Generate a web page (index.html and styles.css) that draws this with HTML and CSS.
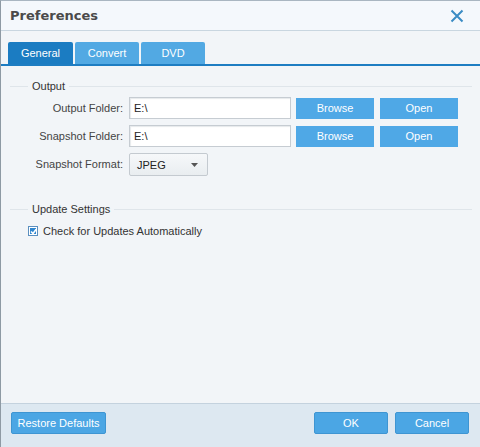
FILE: index.html
```html
<!DOCTYPE html>
<html>
<head>
<meta charset="utf-8">
<link rel="stylesheet" href="styles.css">
</head>
<body>
<div class="window">
  <div class="titlebar">
    <span class="title">Preferences</span>
    <svg class="close" width="14" height="14" viewBox="0 0 14 14"><path d="M1.5 1.5 L12.5 12.5 M12.5 1.5 L1.5 12.5" stroke="#3a8cc4" stroke-width="2" fill="none"/></svg>
  </div>
  <div class="tabs">
    <div class="tab active">General</div>
    <div class="tab">Convert</div>
    <div class="tab">DVD</div>
  </div>
  <div class="content">
    <fieldset class="group">
      <legend>Output</legend>
      <div class="row">
        <span class="label">Output Folder:</span>
        <div class="input">E:\</div>
        <div class="btn">Browse</div>
        <div class="btn">Open</div>
      </div>
      <div class="row">
        <span class="label">Snapshot Folder:</span>
        <div class="input">E:\</div>
        <div class="btn">Browse</div>
        <div class="btn">Open</div>
      </div>
      <div class="row">
        <span class="label">Snapshot Format:</span>
        <div class="select"><span>JPEG</span><svg width="7" height="4" viewBox="0 0 7 4"><path d="M0 0 H7 L3.5 4 Z" fill="#555"/></svg></div>
      </div>
    </fieldset>
    <fieldset class="group group2">
      <legend>Update Settings</legend>
      <div class="check">
        <span class="box"><svg width="7" height="7" viewBox="0 0 7 7"><path d="M1 3.5 L3 5.5 L6.2 1.2" stroke="#fff" stroke-width="1.6" fill="none"/></svg></span>
        <span>Check for Updates Automatically</span>
      </div>
    </fieldset>
  </div>
  <div class="footer">
    <div class="fbtn restore">Restore Defaults</div>
    <div class="spacer"></div>
    <div class="fbtn ok">OK</div>
    <div class="fbtn cancel">Cancel</div>
  </div>
</div>
</body>
</html>
```
FILE: styles.css
```css
* { box-sizing: border-box; }
html, body { margin: 0; padding: 0; }
body {
  font-family: "Liberation Sans", Arial, sans-serif;
  font-size: 11px;
  color: #333;
}
.window {
  width: 480px;
  height: 447px;
  display: flex;
  flex-direction: column;
  border-left: 1px solid #8e9aa4;
  border-top: 1px solid #a9b6c1;
  background: #f2f5f8;
}
.titlebar {
  height: 30px;
  flex: none;
  display: flex;
  align-items: center;
  justify-content: space-between;
  padding: 0 16px 0 9px;
  background: #f4f8fc;
  border-bottom: 1px solid #c9d6e0;
}
.title {
  font-family: "DejaVu Sans", sans-serif;
  font-weight: bold;
  font-size: 13px;
  color: #4a4a4a;
}
.close { display: block; }
.tabs {
  flex: none;
  display: flex;
  gap: 2px;
  padding: 11px 0 0 7px;
  height: 35px;
  border-bottom: 2px solid #1e7dc2;
  background: #f2f5f8;
}
.tab {
  width: 64px;
  height: 22px;
  line-height: 22px;
  text-align: center;
  color: #fff;
  background: #52a9e3;
  border-radius: 2px 2px 0 0;
  font-size: 11px;
}
.tab.active { background: #1b7cc2; width: 65px; }
.content {
  flex: 1;
  padding: 14px 8px 0 9px;
  background: #f2f5f8;
}
.group {
  margin: 0;
  padding: 5px 0 0 0;
  border: none;
  border-top: 1px solid #dfe5ea;
  min-width: 0;
}
.group legend {
  margin-left: 18px;
  padding: 0 4px;
  font-size: 11px;
  color: #333;
}
.group2 { margin-top: 22px; }
.row {
  display: flex;
  align-items: center;
  height: 22px;
  margin-bottom: 6px;
}
.label {
  width: 119px;
  text-align: right;
  padding-right: 6px;
  font-size: 11px;
  color: #444;
}
.input {
  width: 162px;
  height: 22px;
  line-height: 20px;
  border: 1px solid #c6ccd2;
  background: #fff;
  box-shadow: inset 1px 1px 1px #e6e9ec;
  padding-left: 4px;
  color: #222;
  margin-right: 5px;
}
.btn {
  width: 78px;
  height: 21px;
  line-height: 21px;
  text-align: center;
  background: #4fa8e6;
  color: #fff;
  margin-right: 6px;
  font-size: 11px;
}
.select {
  width: 79px;
  height: 23px;
  margin-top: 1px;
  border: 1px solid #c4cad0;
  border-radius: 2px;
  background: linear-gradient(#f6f8fa, #e9edf0);
  display: flex;
  align-items: center;
  justify-content: space-between;
  padding: 0 9px 0 7px;
  color: #222;
}
.check {
  display: flex;
  align-items: center;
  gap: 5px;
  padding-left: 18px;
  margin-top: 5px;
  font-size: 11px;
  color: #333;
}
.box {
  width: 10px;
  height: 10px;
  border: 1px solid #5b8fbf;
  background: #2f86cf;
  box-shadow: inset 0 0 0 1px #fff;
  display: flex;
  align-items: center;
  justify-content: center;
}
.box svg { display: block; }
.footer {
  flex: none;
  height: 44px;
  border-top: 1px solid #c4d2de;
  background: #dde8f1;
  display: flex;
  align-items: flex-start;
  padding: 8px 11px 0 10px;
  gap: 7px;
}
.spacer { flex: 1; }
.fbtn {
  height: 22px;
  line-height: 20px;
  border: 1px solid #3e95d2;
  border-radius: 2px;
  background: #4ba6e4;
  color: #fff;
  text-align: center;
  font-size: 11px;
}
.restore { width: 95px; }
.ok, .cancel { width: 74px; }
```
